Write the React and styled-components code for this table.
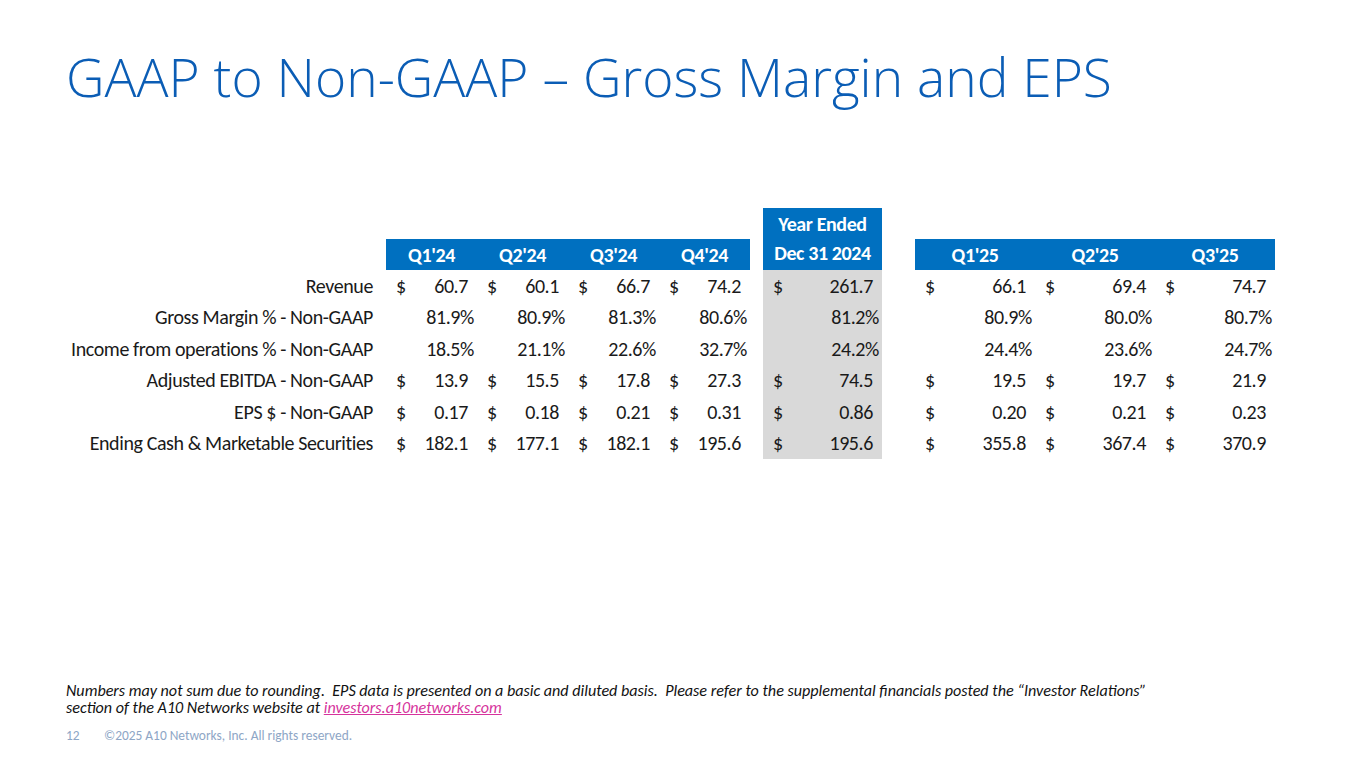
import React from "react";
import styled, { createGlobalStyle } from "styled-components";

const GlobalStyle = createGlobalStyle`
  html, body {
    margin: 0;
    padding: 0;
    background: #ffffff;
  }
`;

const COLS = "307px 13px repeat(4, 91px) 13px 119px 33px repeat(3, 120px)";
const BLUE = "#0070C0";

const rows = [
  { label: "Revenue", money: true, q24: ["60.7", "60.1", "66.7", "74.2"], year: "261.7", q25: ["66.1", "69.4", "74.7"] },
  { label: "Gross Margin % - Non-GAAP", money: false, q24: ["81.9%", "80.9%", "81.3%", "80.6%"], year: "81.2%", q25: ["80.9%", "80.0%", "80.7%"] },
  { label: "Income from operations % - Non-GAAP", money: false, q24: ["18.5%", "21.1%", "22.6%", "32.7%"], year: "24.2%", q25: ["24.4%", "23.6%", "24.7%"] },
  { label: "Adjusted EBITDA - Non-GAAP", money: true, q24: ["13.9", "15.5", "17.8", "27.3"], year: "74.5", q25: ["19.5", "19.7", "21.9"] },
  { label: "EPS $ - Non-GAAP", money: true, q24: ["0.17", "0.18", "0.21", "0.31"], year: "0.86", q25: ["0.20", "0.21", "0.23"] },
  { label: "Ending Cash & Marketable Securities", money: true, q24: ["182.1", "177.1", "182.1", "195.6"], year: "195.6", q25: ["355.8", "367.4", "370.9"] },
];

export default function App() {
  return (
    <>
      <GlobalStyle />
      <Slide>
        <Title>GAAP to Non-GAAP – Gross Margin and EPS</Title>

        <TableWrap>
          <HeadGrid>
            <YearHead>
              <span>Year Ended</span>
              <span>Dec 31 2024</span>
            </YearHead>
            {["Q1'24", "Q2'24", "Q3'24", "Q4'24"].map((q, i) => (
              <QHead key={q} $col={3 + i}>{q}</QHead>
            ))}
            {["Q1'25", "Q2'25", "Q3'25"].map((q, i) => (
              <QHead key={q} $col={10 + i}>{q}</QHead>
            ))}
          </HeadGrid>

          <BodyGrid>
            {rows.map((r) => (
              <React.Fragment key={r.label}>
                <Label>{r.label}</Label>
                <span />
                {r.q24.map((v, i) => (
                  <Cell key={"a" + i} $pct={!r.money}>
                    {r.money && <Dollar>$</Dollar>}
                    <span>{v}</span>
                  </Cell>
                ))}
                <span />
                <Cell $pct={!r.money} $shaded>
                  {r.money && <Dollar>$</Dollar>}
                  <span>{r.year}</span>
                </Cell>
                <span />
                {r.q25.map((v, i) => (
                  <Cell key={"b" + i} $pct={!r.money}>
                    {r.money && <Dollar>$</Dollar>}
                    <span>{v}</span>
                  </Cell>
                ))}
              </React.Fragment>
            ))}
          </BodyGrid>
        </TableWrap>

        <Footnote>
          Numbers may not sum due to rounding.&nbsp; EPS data is presented on a basic and diluted basis.&nbsp; Please refer to the supplemental financials posted the “Investor Relations”
          <br />
          section of the A10 Networks website at <FootLink href="#">investors.a10networks.com</FootLink>
        </Footnote>

        <Footer>
          <PageNum>12</PageNum>
          <span>©2025 A10 Networks, Inc. All rights reserved.</span>
        </Footer>
      </Slide>
    </>
  );
}

const Slide = styled.div`
  width: 1365px;
  height: 768px;
  box-sizing: border-box;
  padding: 0 0 24px 66px;
  display: flex;
  flex-direction: column;
  background: #fff;
  overflow: hidden;
`;

const Title = styled.h1`
  margin: 47px 0 0 0;
  font-family: "Open Sans", sans-serif;
  font-weight: 300;
  font-size: 53.3px;
  line-height: 60px;
  color: #0B5DB5;
  white-space: nowrap;
`;

const TableWrap = styled.div`
  margin-top: 101px;
  font-family: Carlito, Lato, "Liberation Sans", sans-serif;
  font-size: 20px;
  letter-spacing: -0.4px;
  color: #1a1a1a;
`;

const HeadGrid = styled.div`
  display: grid;
  grid-template-columns: ${COLS};
  grid-template-rows: 31px 31px;
`;

const YearHead = styled.div`
  grid-column: 8;
  grid-row: 1 / span 2;
  background: ${BLUE};
  color: #fff;
  font-weight: 700;
  display: flex;
  flex-direction: column;
  align-items: center;
  justify-content: space-around;
  padding: 1px 0 2px;
  box-sizing: border-box;
  line-height: 28px;
  white-space: nowrap;
`;

const QHead = styled.div`
  grid-row: 2;
  grid-column: ${(p) => p.$col};
  background: ${BLUE};
  color: #fff;
  font-weight: 700;
  display: flex;
  align-items: center;
  justify-content: center;
`;

const BodyGrid = styled.div`
  display: grid;
  grid-template-columns: ${COLS};
  grid-auto-rows: 31.5px;
`;

const Label = styled.div`
  display: flex;
  align-items: center;
  justify-content: flex-end;
  white-space: nowrap;
`;

const Cell = styled.div`
  display: flex;
  align-items: center;
  justify-content: ${(p) => (p.$pct ? "flex-end" : "space-between")};
  padding: 0 ${(p) => (p.$pct ? 3 : 9)}px 0 10px;
  background: ${(p) => (p.$shaded ? "#D9D9D9" : "transparent")};
  white-space: nowrap;
`;

const Dollar = styled.span`
  display: inline-block;
`;

const Footnote = styled.p`
  margin: auto 0 0 0;
  font-family: Carlito, Lato, "Open Sans", sans-serif;
  font-style: italic;
  font-size: 16.1px;
  line-height: 17px;
  color: #111;
  white-space: nowrap;
`;

const FootLink = styled.a`
  color: #D6339C;
  text-decoration: underline;
`;

const Footer = styled.div`
  margin-top: 12px;
  display: flex;
  gap: 24px;
  font-family: Carlito, Lato, "Open Sans", sans-serif;
  font-size: 13.4px;
  line-height: 16px;
  color: #8EA6C6;
`;

const PageNum = styled.span`
  width: 14px;
`;
